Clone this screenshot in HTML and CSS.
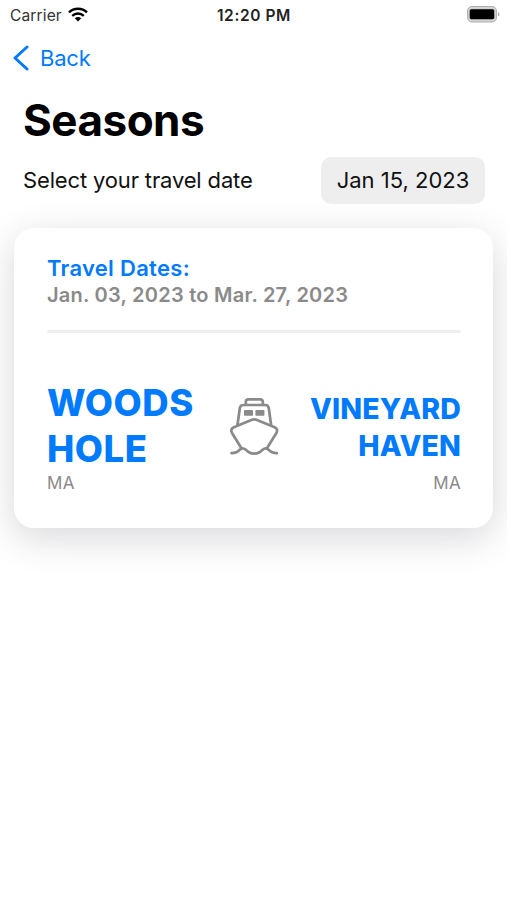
FILE: index.html
```html
<!DOCTYPE html>
<html lang="en">
<head>
    <meta charset="UTF-8">
    <meta name="viewport" content="width=device-width, initial-scale=1.0">
    <title>Seasons</title>
    <link rel="stylesheet" href="styles.css">
</head>
<body>

    <div class="status-bar">
        <div class="carrier">
            <span>Carrier</span>
            <svg class="wifi" width="20" height="15" viewBox="0 0 20 15">
                <path d="M1 5.3C6 0.4 14 0.4 19 5.3" fill="none" stroke="#000" stroke-width="2.5"/>
                <path d="M4.2 8.9C7.6 5.7 12.4 5.7 15.8 8.9" fill="none" stroke="#000" stroke-width="2.4"/>
                <path d="M6.8 11.2Q10 8.6 13.2 11.2L10 14.5Z"/>
            </svg>
        </div>
        <span class="time">12:20 PM</span>
        <div class="battery-wrap">
            <svg class="battery" width="33" height="17" viewBox="0 0 33 17">
                <rect x="0.5" y="0.5" width="29" height="15.5" rx="4.5" fill="#d2d2d2" stroke="#b0b0b0"/>
                <rect x="2.7" y="3.2" width="24.6" height="10" rx="1.6"/>
                <path d="M31 6.2Q32.4 6.8 32.4 8.3T31 10.4Z" fill="#a6a6a6"/>
            </svg>
        </div>
    </div>

    <div class="nav-bar">
        <svg class="chevron" width="17" height="28" viewBox="0 0 17 28">
            <path d="M15 3L3 14L15 25" fill="none" stroke="#007aff" stroke-width="3" stroke-linecap="round" stroke-linejoin="round"/>
        </svg>
        <span class="back">Back</span>
    </div>

    <h1>Seasons</h1>

    <div class="date-row">
        <span class="date-label">Select your travel date</span>
        <button class="date-picker">Jan 15, 2023</button>
    </div>

    <div class="card">
        <div class="travel-title">Travel Dates:</div>
        <div class="travel-dates">Jan. 03, 2023 to Mar. 27, 2023</div>
        <div class="divider"></div>

        <div class="route">
            <div class="port from">
                <div class="port-name">WOODS<br>HOLE</div>
                <div class="state">MA</div>
            </div>
            <svg class="ferry" width="50" height="60" viewBox="0 0 50 60">
                <g fill="none" stroke="#8a8a8a" stroke-width="2.7" stroke-linecap="round" stroke-linejoin="round">
                    <path d="M16.8 8V4.9Q16.8 2.4 19.3 2.4H31.3Q33.8 2.4 33.8 4.9V8"/>
                    <path d="M8.5 28L10.8 11.2Q11.3 8 14.4 8H36.2Q39.3 8 39.8 11.2L42.1 28"/>
                    <path d="M12 50.5L3 36Q1 32 4.8 30.2L23 22.8Q25.2 22 27.4 22.8L45.6 30.2Q49.4 32 47.4 36L38.4 50.5"/>
                    <path d="M2.5 56.2Q8 56.2 10.8 52.7Q13.5 50 16.5 52.5Q18.2 54 20 55.3Q25.2 58 30.4 55.3Q32.2 54 33.9 52.5Q36.9 50 39.6 52.7Q42.4 56.2 47.9 56.2"/>
                </g>
                <rect x="15" y="13" width="9" height="5.8" rx="0.8" fill="#8a8a8a"/>
                <rect x="26.4" y="13" width="9" height="5.8" rx="0.8" fill="#8a8a8a"/>
            </svg>
            <div class="port to">
                <div class="port-name">VINEYARD<br>HAVEN</div>
                <div class="state">MA</div>
            </div>
        </div>
    </div>

</body>
</html>
```
FILE: styles.css
```css
body {
    font-family: Inter, "Liberation Sans", sans-serif;
    margin: 0;
    min-height: 100vh;
    background-color: #fff;
    color: #000;
}
.status-bar {
    display: grid;
    grid-template-columns: 1fr auto 1fr;
    align-items: center;
    height: 29px;
    padding: 0 7px 0 10px;
}
.carrier {
    display: flex;
    align-items: center;
    gap: 6px;
    font-size: 15.5px;
    letter-spacing: 0.15px;
    color: #333;
}
.carrier span, .time {
    padding-top: 1px;
}
.time {
    margin-right: 2px;
    font-size: 15.5px;
    letter-spacing: 0.6px;
    font-weight: 600;
    color: #222;
}
.battery-wrap {
    display: flex;
    justify-content: flex-end;
}
.nav-bar {
    display: flex;
    align-items: center;
    height: 57px;
    padding-left: 12px;
    gap: 11px;
    color: #007aff;
}
.back {
    font-size: 22px;
    letter-spacing: -0.2px;
}
h1 {
    margin: 7px 23px 0;
    font-size: 44px;
    line-height: 54px;
    font-weight: 700;
    letter-spacing: -0.5px;
}
.date-row {
    display: flex;
    justify-content: space-between;
    align-items: center;
    margin: 10px 22px 0 23px;
}
.date-label {
    padding-bottom: 1px;
    font-size: 22px;
    letter-spacing: -0.15px;
    color: #111;
}
.date-picker {
    width: 164px;
    height: 47px;
    padding: 0 0 1px;
    border: none;
    border-radius: 10px;
    background-color: #eeeeef;
    font-family: inherit;
    font-size: 22px;
    color: #111;
    white-space: nowrap;
}
.card {
    box-sizing: border-box;
    height: 300px;
    margin: 24px 14px 0;
    padding: 26px 32px 0 33px;
    border-radius: 20px;
    background-color: #fff;
    box-shadow: 0 10px 38px rgba(10, 10, 30, 0.16);
}
.travel-title {
    font-size: 22px;
    line-height: 28px;
    letter-spacing: 0.3px;
    font-weight: 600;
    color: #007aff;
}
.travel-dates {
    font-size: 20px;
    line-height: 26px;
    letter-spacing: 0.25px;
    font-weight: 600;
    color: #8a8a8a;
}
.divider {
    height: 3px;
    margin-top: 22px;
    border-radius: 2px;
    background-color: #efefef;
}
.route {
    display: grid;
    grid-template-columns: 1fr 50px 1fr;
    align-items: end;
    margin-top: 47px;
}
.port-name {
    font-weight: 800;
    color: #007aff;
}
.from .port-name {
    font-size: 36.5px;
    line-height: 46px;
    letter-spacing: 0.5px;
}
.to {
    text-align: right;
}
.to .port-name {
    margin-bottom: 8px;
    font-size: 28.5px;
    line-height: 36.5px;
    letter-spacing: 0.15px;
}
.state {
    font-size: 17px;
    line-height: 22px;
    letter-spacing: 0.3px;
    color: #8a8a8a;
}
.ferry {
    margin-bottom: 37px;
}
```
